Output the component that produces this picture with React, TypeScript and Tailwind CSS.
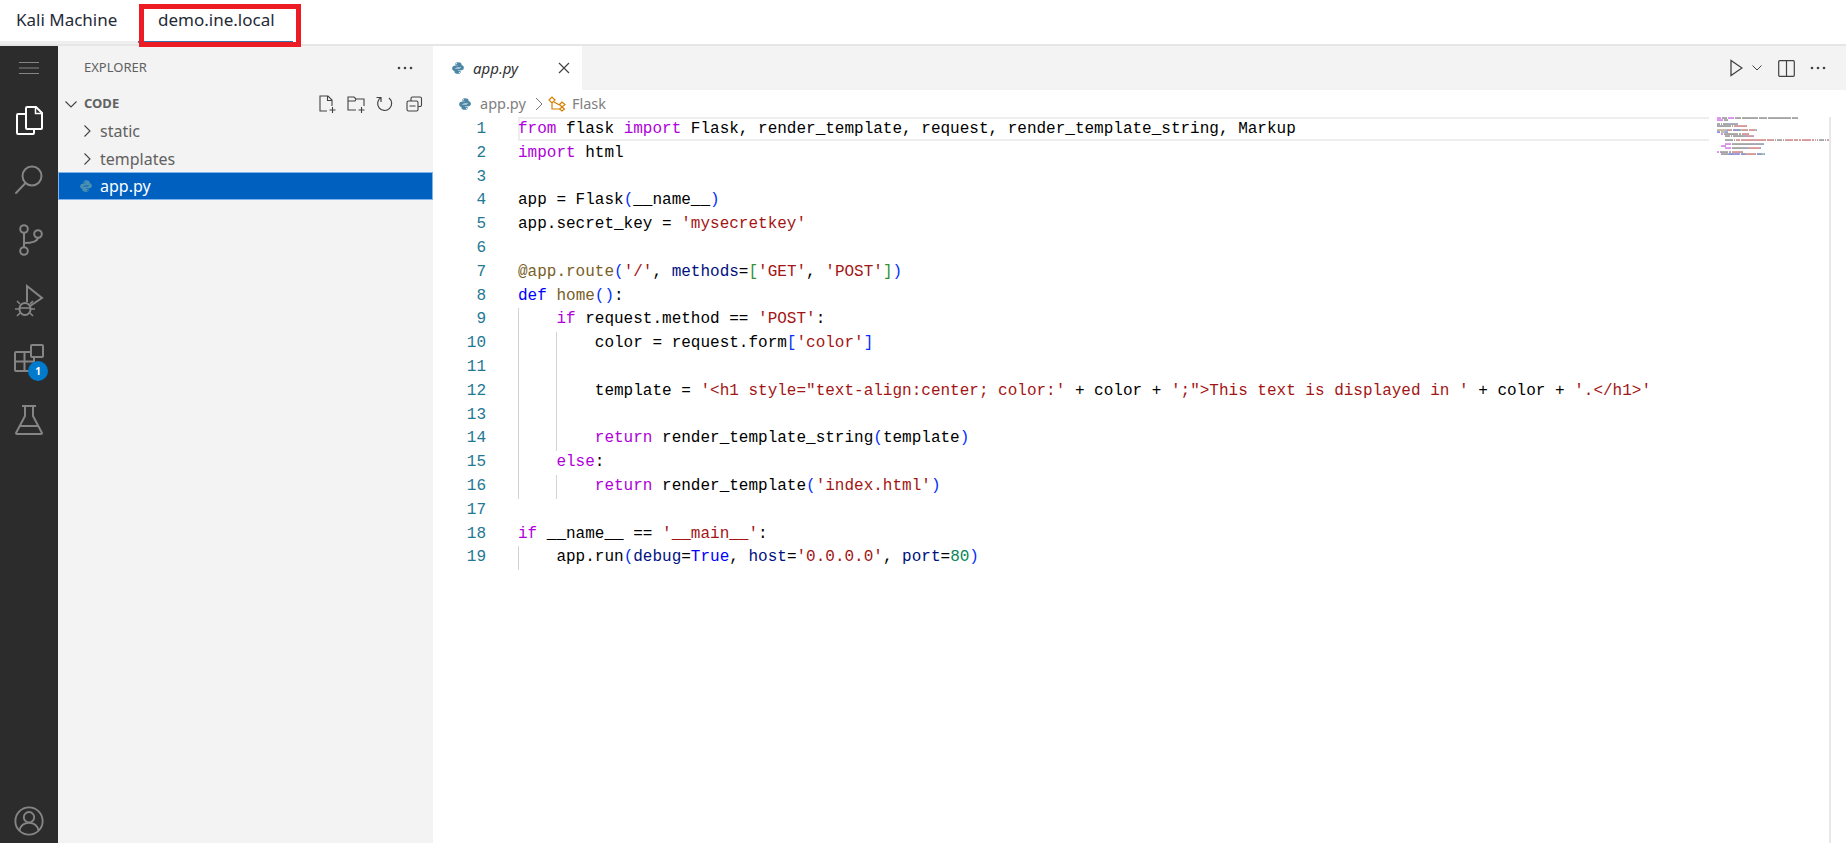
import React from "react";

const KW = "text-[#af00db]";
const BL = "text-[#0000ff]";
const FN = "text-[#795e26]";
const ST = "text-[#a31515]";
const VR = "text-[#001080]";
const NM = "text-[#098658]";
const B1 = "text-[#0431fa]";
const B2 = "text-[#319331]";
const TX = "text-black";

type Token = [string, string];

const KEYS: Record<string, string> = {
  [KW]: "#af00db",
  [BL]: "#0000ff",
  [FN]: "#795e26",
  [ST]: "#a31515",
  [VR]: "#001080",
  [NM]: "#098658",
  [B1]: "#0431fa",
  [B2]: "#319331",
  [TX]: "#333333",
};

const lines: { tokens: Token[]; guides: number }[] = [
  { guides: 0, tokens: [["from", KW], [" flask ", TX], ["import", KW], [" Flask, render_template, request, render_template_string, Markup", TX]] },
  { guides: 0, tokens: [["import", KW], [" html", TX]] },
  { guides: 0, tokens: [] },
  { guides: 0, tokens: [["app = Flask", TX], ["(", B1], ["__name__", TX], [")", B1]] },
  { guides: 0, tokens: [["app.secret_key = ", TX], ["'mysecretkey'", ST]] },
  { guides: 0, tokens: [] },
  { guides: 0, tokens: [["@app.route", FN], ["(", B1], ["'/'", ST], [", ", TX], ["methods", VR], ["=", TX], ["[", B2], ["'GET'", ST], [", ", TX], ["'POST'", ST], ["]", B2], [")", B1]] },
  { guides: 0, tokens: [["def", BL], [" ", TX], ["home", FN], ["()", B1], [":", TX]] },
  { guides: 1, tokens: [["    ", TX], ["if", KW], [" request.method == ", TX], ["'POST'", ST], [":", TX]] },
  { guides: 2, tokens: [["        color = request.form", TX], ["[", B1], ["'color'", ST], ["]", B1]] },
  { guides: 2, tokens: [] },
  { guides: 2, tokens: [["        template = ", TX], ["'<h1 style=\"text-align:center; color:'", ST], [" + color + ", TX], ["';\">This text is displayed in '", ST], [" + color + ", TX], ["'.</h1>'", ST]] },
  { guides: 2, tokens: [] },
  { guides: 2, tokens: [["        ", TX], ["return", KW], [" render_template_string", TX], ["(", B1], ["template", TX], [")", B1]] },
  { guides: 1, tokens: [["    ", TX], ["else", KW], [":", TX]] },
  { guides: 2, tokens: [["        ", TX], ["return", KW], [" render_template", TX], ["(", B1], ["'index.html'", ST], [")", B1]] },
  { guides: 0, tokens: [] },
  { guides: 0, tokens: [["if", KW], [" __name__ == ", TX], ["'__main__'", ST], [":", TX]] },
  { guides: 1, tokens: [["    app.run", TX], ["(", B1], ["debug", VR], ["=", TX], ["True", BL], [", ", TX], ["host", VR], ["=", TX], ["'0.0.0.0'", ST], [", ", TX], ["port", VR], ["=", TX], ["80", NM], [")", B1]] },
];

const PythonIcon = ({ className }: { className?: string }) => (
  <svg viewBox="0 0 24 24" className={className} fill="currentColor">
    <path d="M11.900 2C7.900 2 7.600 3.700 7.600 5.300v2.200h4.500v.8H5.600C3.600 8.300 2 9.800 2 12.500s1.400 4.400 3.400 4.400H7v-2.200c0-1.900 1.600-3.600 3.600-3.600h4.600c1.600 0 2.900-1.300 2.900-2.900V5.300C18.100 3.700 15.900 2 11.900 2zM9.600 3.600a.9.900 0 1 1 0 1.800.9.900 0 0 1 0-1.800z" />
    <path transform="rotate(180 12 12)" d="M11.900 2C7.900 2 7.600 3.700 7.600 5.300v2.200h4.500v.8H5.600C3.600 8.300 2 9.800 2 12.500s1.400 4.400 3.400 4.400H7v-2.200c0-1.900 1.600-3.600 3.600-3.600h4.600c1.600 0 2.900-1.300 2.900-2.900V5.300C18.100 3.700 15.900 2 11.900 2zM9.600 3.600a.9.900 0 1 1 0 1.800.9.900 0 0 1 0-1.800z" />
  </svg>
);

const ActivityIcon = ({ children, size = 34 }: { children: React.ReactNode; size?: number }) => (
  <svg
    viewBox="0 0 34 34"
    width={size}
    height={size}
    fill="none"
    stroke="currentColor"
    strokeWidth="2"
  >
    {children}
  </svg>
);

const Dots = ({ className }: { className?: string }) => (
  <svg viewBox="0 0 16 4" width="16" height="4" className={className} fill="currentColor">
    <circle cx="2" cy="2" r="1.300" />
    <circle cx="8" cy="2" r="1.300" />
    <circle cx="14" cy="2" r="1.300" />
  </svg>
);

const Chevron = ({ open }: { open?: boolean }) => (
  <svg viewBox="0 0 16 16" width="16" height="16" fill="none" stroke="#424242" strokeWidth="1.100">
    {open ? <path d="M2.500 5.500 8 11l5.500-5.500" /> : <path d="M5.500 2.500 11 8l-5.500 5.500" />}
  </svg>
);

// one block per word, 1px per character and 2px per line
const Minimap = () => (
  <svg width="113" height="60" className="shrink-0">
    {lines.map((line, i) => {
      let col = 0;
      return line.tokens.map(([text, cls], j) => {
        const start = col;
        col += text.length;
        return Array.from(text.matchAll(/\S+/g)).map((m) => (
          <rect
            key={`${i}-${j}-${m.index}`}
            x={1 + start + (m.index ?? 0)}
            y={i * 2 + 0.300}
            width={m[0].length}
            height={1.500}
            fill={KEYS[cls]}
            opacity={0.55}
          />
        ));
      });
    })}
  </svg>
);

export default function App() {
  return (
    <div className="relative flex h-[843px] w-[1846px] flex-col overflow-hidden bg-white font-['Noto_Sans',sans-serif]">
      {/* lab tabs */}
      <div className="flex h-[46px] shrink-0 items-stretch border-b-2 border-[#e6e6e6] bg-white text-[17px] text-[#1f2a37]">
        <div className="flex h-[44px] w-[138px] items-center border-b-[3px] border-[#efefef] pb-[1px] pl-[16px]">Kali Machine</div>
        <div className="flex h-[43px] w-[155px] items-center border-b-2 border-[#3b6ea5] pb-[2px] pl-[20px]">demo.ine.local</div>
      </div>
      {/* red annotation */}
      <div className="absolute left-[139px] top-[4px] h-[43px] w-[162px] border-[5px] border-[#ed1c24]" />

      <div className="flex min-h-0 flex-1">
        {/* activity bar */}
        <div className="flex w-[58px] shrink-0 flex-col items-center bg-[#2c2c2c] text-[#858585]">
          <div className="flex h-[44px] items-center">
            <svg viewBox="0 0 22 16" width="22" height="16" fill="none" stroke="currentColor" strokeWidth="1.200">
              <path d="M1 2.500h20M1 8h20M1 13.500h20" />
            </svg>
          </div>
          <div className="flex h-[60px] items-center text-white">
            <ActivityIcon>
              <path d="M15 4h9l6 6v15a1 1 0 0 1-1 1H15a1 1 0 0 1-1-1V5a1 1 0 0 1 1-1z" />
              <path d="M23.500 4v6.500H30" strokeWidth="1.500" />
              <path d="M14 11H6a1 1 0 0 0-1 1v18a1 1 0 0 0 1 1h15a1 1 0 0 0 1-1v-4" />
            </ActivityIcon>
          </div>
          <div className="flex h-[60px] items-center">
            <ActivityIcon>
              <circle cx="20" cy="13" r="9.500" />
              <path d="M13.500 20 4 30" strokeLinecap="round" />
            </ActivityIcon>
          </div>
          <div className="flex h-[60px] items-center">
            <ActivityIcon>
              <circle cx="12" cy="6" r="3.800" />
              <circle cx="12" cy="28" r="3.800" />
              <circle cx="26" cy="11" r="3.800" />
              <path d="M12 10v14M12 20c7 0 13-1 14-5" />
            </ActivityIcon>
          </div>
          <div className="flex h-[60px] items-center">
            <ActivityIcon>
              <path d="M15 19V3l15 12-12 8" />
              <path d="M5 18l3 3M21 18l-3 3M3 26h5M18 26h5M5 33l3-3M21 33l-3-3" strokeWidth="1.600" />
              <rect x="7.500" y="20" width="11" height="12" rx="5.500" fill="#2c2c2c" />
              <path d="M8 25h10" strokeWidth="1.600" />
            </ActivityIcon>
          </div>
          <div className="relative flex h-[60px] items-center">
            <ActivityIcon>
              <rect x="3" y="9" width="19" height="19" rx="1" />
              <path d="M3 18.500h19M12.500 9v19" />
              <rect x="19" y="2" width="12" height="12" rx="1" fill="#2c2c2c" />
            </ActivityIcon>
            <span className="absolute left-[16px] top-[31px] flex h-[20px] w-[20px] items-center justify-center rounded-full bg-[#007acc] text-[10px] font-bold text-white">
              1
            </span>
          </div>
          <div className="flex h-[60px] items-center">
            <ActivityIcon>
              <path d="M10 3h14M13 3v10L4 30a1 1 0 0 0 1 1h24a1 1 0 0 0 1-1L21 13V3" />
              <path d="M8 23h18" />
            </ActivityIcon>
          </div>
          <div className="mt-auto flex h-[38px] items-start">
            <ActivityIcon size={32}>
              <circle cx="17" cy="17" r="14.500" />
              <circle cx="17" cy="13" r="5.500" />
              <path d="M7 27c1-5 5-8 10-8s9 3 10 8" />
            </ActivityIcon>
          </div>
        </div>

        {/* explorer */}
        <div className="flex w-[375px] shrink-0 flex-col bg-[#f3f3f3] text-[14px] text-[#616161]">
          <div className="flex h-[44px] items-center justify-between pl-[26px] pr-[20px] text-[13px]">
            <span>EXPLORER</span>
            <Dots className="text-[#424242]" />
          </div>
          <div className="flex h-[27px] items-center pl-[5px] pr-[9px] text-[13px] font-bold">
            <Chevron open />
            <span className="ml-[5px] flex-1">CODE</span>
            <div className="flex items-center gap-[9px] text-[#424242]">
              <svg viewBox="0 0 20 20" width="20" height="20" fill="none" stroke="currentColor" strokeWidth="1.100">
                <path d="M10 17H3V2h8l4 4v6M10.500 2v4.500H15M15.500 13v6M12.500 16h6" />
              </svg>
              <svg viewBox="0 0 20 20" width="20" height="20" fill="none" stroke="currentColor" strokeWidth="1.100">
                <path d="M10 16H2V3h6l2 2h8v7M2 7h7l1-2M15.500 13v6M12.500 16h6" />
              </svg>
              <svg viewBox="0 0 20 20" width="20" height="20" fill="none" stroke="currentColor" strokeWidth="1.200">
                <path d="M6 3.500A7 7 0 1 0 14 4M6 8V3.500H1.500" />
              </svg>
              <svg viewBox="0 0 20 20" width="20" height="20" fill="none" stroke="currentColor" strokeWidth="1.100">
                <rect x="3" y="7" width="11" height="10" rx="1.500" />
                <path d="M7 7V4.500A1.500 1.500 0 0 1 8.500 3H16a1.500 1.500 0 0 1 1.500 1.500V11a1.500 1.500 0 0 1-1.500 1.500h-2M5.500 12h6" />
              </svg>
            </div>
          </div>
          <div className="flex h-[28px] items-center pl-[21px] text-[16px]">
            <Chevron />
            <span className="ml-[5px]">static</span>
          </div>
          <div className="flex h-[27px] items-center pl-[21px] pt-[1px] text-[16px]">
            <Chevron />
            <span className="ml-[5px]">templates</span>
          </div>
          <div className="flex h-[28px] items-center border border-[#7fb5ec] bg-[#0060c0] pl-[20px] text-[16px] text-white">
            <PythonIcon className="h-[14px] w-[14px] text-[#4a90b0]" />
            <span className="ml-[7px]">app.py</span>
          </div>
        </div>

        {/* editor */}
        <div className="flex min-w-0 flex-1 flex-col">
          <div className="flex h-[44px] shrink-0 bg-[#f3f3f3]">
            <div className="flex w-[149px] items-center bg-white pl-[18px] text-[#333333]">
              <PythonIcon className="h-[14px] w-[14px] text-[#4b87a5]" />
              <span className="ml-[8px] text-[15px] italic">app.py</span>
              <svg viewBox="0 0 12 12" width="12" height="12" className="ml-[40px]" fill="none" stroke="#424242" strokeWidth="1.200">
                <path d="M1 1l10 10M11 1 1 11" />
              </svg>
            </div>
            <div className="ml-auto flex items-center pr-[20px] text-[#424242]">
              <svg viewBox="0 0 14 18" width="14" height="18" fill="none" stroke="currentColor" strokeWidth="1.300">
                <path d="M2 1.500v15L13 9z" />
              </svg>
              <svg viewBox="0 0 10 6" width="10" height="6" className="ml-[9px]" fill="none" stroke="currentColor" strokeWidth="1">
                <path d="M.500.500 5 5 9.500.500" />
              </svg>
              <svg viewBox="0 0 17 17" width="17" height="17" className="ml-[16px]" fill="none" stroke="currentColor" strokeWidth="1.200">
                <rect x=".700" y=".700" width="15.600" height="15.600" rx="1" />
                <path d="M8.500.700v15.600" />
              </svg>
              <Dots className="ml-[15px]" />
            </div>
          </div>

          <div className="flex h-[27px] shrink-0 items-center pl-[25px] text-[14.500px] text-[#808080]">
            <PythonIcon className="h-[14px] w-[14px] text-[#4b87a5]" />
            <span className="ml-[8px]">app.py</span>
            <svg viewBox="0 0 8 14" width="8" height="14" className="ml-[9px]" fill="none" stroke="#7a7a7a" strokeWidth="1">
              <path d="M1 1l6 6-6 6" />
            </svg>
            <svg viewBox="0 0 18 16" width="18" height="16" className="ml-[5px]" fill="none" stroke="#d67e00" strokeWidth="1.200">
              <path d="M1 4l3-3 3 3-3 3zM11.500 8.500l2.500-2.500 3 2.500-3 2.500zM11.500 13l2.500-2 2.500 2-2.500 2zM6 6l5.500 3M4 7v6h7" />
            </svg>
            <span className="ml-[6px]">Flask</span>
          </div>

          <div className="flex min-h-0 flex-1">
            <div className="min-w-0 flex-1 font-['Liberation_Mono',monospace] text-[16px] leading-[23.800px]">
              {lines.map((line, i) => (
                <div key={i} className="flex h-[23.800px] pt-[1px]">
                  <div className="w-[85px] shrink-0 pr-[32px] text-right text-[#237893]">{i + 1}</div>
                  <div className="relative whitespace-pre">
                    {i === 0 && <span className="absolute -top-[1px] left-0 h-[24px] w-[1191px] border-2 border-r-0 border-[#eeeeee]" />}
                    {line.guides > 0 && <span className="absolute left-0 top-0 h-[23.800px] w-px bg-[#d3d3d3]" />}
                    {line.guides > 1 && <span className="absolute left-[38px] top-0 h-[23.800px] w-px bg-[#d3d3d3]" />}
                    {line.tokens.map(([text, cls], j) => (
                      <span key={j} className={`relative ${cls}`}>
                        {text}
                      </span>
                    ))}
                  </div>
                </div>
              ))}
            </div>
            <Minimap />
            <div className="w-[17px] shrink-0 border-l-2 border-[#e8e8e8]" />
          </div>
        </div>
      </div>
    </div>
  );
}
